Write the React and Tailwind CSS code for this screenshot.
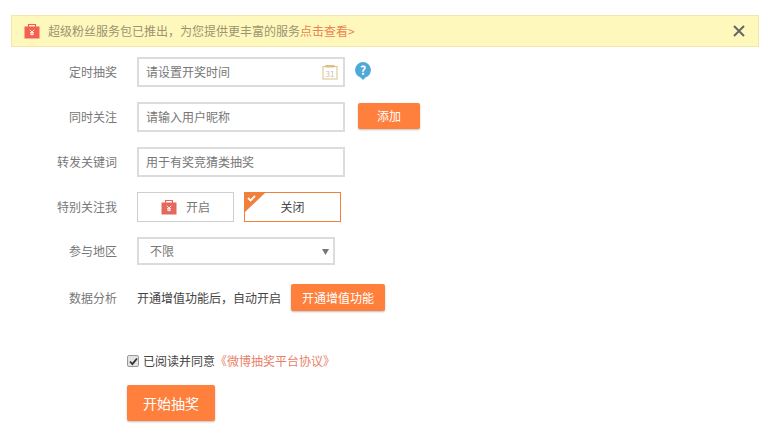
import React from 'react'

const font = { fontFamily: '"Noto Sans CJK SC", sans-serif' }

// little red gift bag used in the notice and the toggle
const BagIcon = ({ color }) => (
  <svg width="16" height="16" viewBox="0 0 16 16">
    <path d="M4.5 4V1.5h7V4" fill="none" stroke={color} strokeWidth="1.2" />
    <rect x="0.5" y="3.5" width="15" height="12" fill={color} />
    <path d="M5.8 6.8 8 9l2.2-2.2M8 9v3.4M6 9.6h4M6 11.2h4" fill="none" stroke="#fff" strokeWidth="0.9" />
  </svg>
)

const Row = ({ label, className, children }) => (
  <div className={`flex items-center ${className}`}>
    <label className="w-[117px] shrink-0 text-right text-[12px] text-[#777]">{label}</label>
    <div className="ml-5 flex items-center">{children}</div>
  </div>
)

const TextInput = ({ placeholder, children }) => (
  <div className="flex h-[30px] w-[208px] items-center justify-between border-2 border-[#dcdcdc] bg-white pl-[7px] pr-1 text-[12px] text-[#777]">
    <span>{placeholder}</span>
    {children}
  </div>
)

export default function App() {
  return (
    <div className="h-[435px] w-[764px] overflow-hidden bg-white" style={font}>
      <div className="pl-[11px] pr-[5px] pt-[15px]">
        <div className="flex h-[32px] items-center justify-between border border-[#f3e6a8] bg-[#fff8bd] pl-[12px] pr-[13px] text-[12px] text-[#9a9470]">
          <div className="flex items-center gap-[8px]">
            <BagIcon color="#f55f4f" />
            <span>超级粉丝服务包已推出，为您提供更丰富的服务<span className="text-[#ea8350]">点击查看&gt;</span></span>
          </div>
          <svg width="12" height="12" viewBox="0 0 12 12">
            <path d="M1 1l10 10M11 1 1 11" stroke="#666" strokeWidth="2" />
          </svg>
        </div>
      </div>

      <Row label="定时抽奖" className="mt-[10px]">
        <TextInput placeholder="请设置开奖时间">
          <svg width="16" height="16" viewBox="0 0 16 16" className="mr-[1px]">
            <rect x="1" y="2.5" width="14" height="12.5" fill="none" stroke="#dcc084" />
            <rect x="3.5" y="1" width="9" height="2.5" fill="#dcc084" />
            <text x="8" y="12.5" textAnchor="middle" fontSize="8" fill="#c9c2ac">31</text>
          </svg>
        </TextInput>
        <svg width="16" height="18" viewBox="0 0 16 18" className="ml-[10px] -mt-[3px]">
          <path d="M8 0a8 8 0 0 1 2.4 15.6L8 18l-2.4-2.4A8 8 0 0 1 8 0z" fill="#4ea9d8" />
          <text x="8" y="12.5" textAnchor="middle" fontSize="12" fontWeight="700" fill="#fff">?</text>
        </svg>
      </Row>

      <Row label="同时关注" className="mt-[15px]">
        <TextInput placeholder="请输入用户昵称" />
        <button className="ml-[13px] -mt-[2px] h-[26px] w-[62px] rounded-[2px] bg-[#ff7f3c] text-[12px] text-white shadow-[0_1px_2px_rgba(0,0,0,0.25)]">添加</button>
      </Row>

      <Row label="转发关键词" className="mt-[15px]">
        <TextInput placeholder="用于有奖竞猜类抽奖" />
      </Row>

      <Row label="特别关注我" className="mt-[15px]">
        <div className="flex h-[30px] w-[97px] items-center justify-center gap-[9px] border border-[#cfcfcf] text-[12px] text-[#777]">
          <BagIcon color="#e4685c" />
          <span>开启</span>
        </div>
        <div className="relative ml-[10px] flex h-[30px] w-[97px] items-center justify-center border border-[#f0803c] text-[12px] text-[#444]">
          <span>关闭</span>
          <svg width="20" height="20" viewBox="0 0 20 20" className="absolute left-0 top-0">
            <path d="M0 0h20L0 19z" fill="#f0803c" />
            <path d="M3 5l2.6 2.4L10 3" fill="none" stroke="#fff" strokeWidth="1.8" />
          </svg>
        </div>
      </Row>

      <Row label="参与地区" className="mt-[15px]">
        <div className="flex h-[28px] w-[198px] items-center justify-between border-2 border-[#dcdcdc] pl-[11px] pr-[4px] text-[12px] text-[#777]">
          <span>不限</span>
          <svg width="7" height="7" viewBox="0 0 7 7">
            <path d="M0 1h7L3.5 7z" fill="#777" />
          </svg>
        </div>
      </Row>

      <Row label="数据分析" className="mt-[19px]">
        <span className="text-[12px] text-[#444]">开通增值功能后，自动开启</span>
        <button className="ml-[10px] h-[27px] w-[94px] rounded-[2px] bg-[#ff7f3c] text-[12px] text-white shadow-[0_1px_2px_rgba(0,0,0,0.25)]">开通增值功能</button>
      </Row>

      <div className="ml-[127px] mt-[41px] flex items-center text-[12px] text-[#444]">
        <span className="flex h-[12px] w-[12px] items-center justify-center rounded-[2px] border border-[#9a9a9a] bg-[#e4e4e4]">
          <svg width="9" height="9" viewBox="0 0 9 9">
            <path d="M1 4.5l2.4 2.6L8 1.5" fill="none" stroke="#333" strokeWidth="1.8" />
          </svg>
        </span>
        <span className="ml-1">已阅读并同意</span>
        <span className="text-[#e87f6a]">《微博抽奖平台协议》</span>
      </div>

      <button className="ml-[127px] mt-[15px] h-[36px] w-[88px] rounded-[2px] bg-[#ff7f3c] text-[14px] text-white shadow-[0_1px_2px_rgba(0,0,0,0.25)]">开始抽奖</button>
    </div>
  )
}
